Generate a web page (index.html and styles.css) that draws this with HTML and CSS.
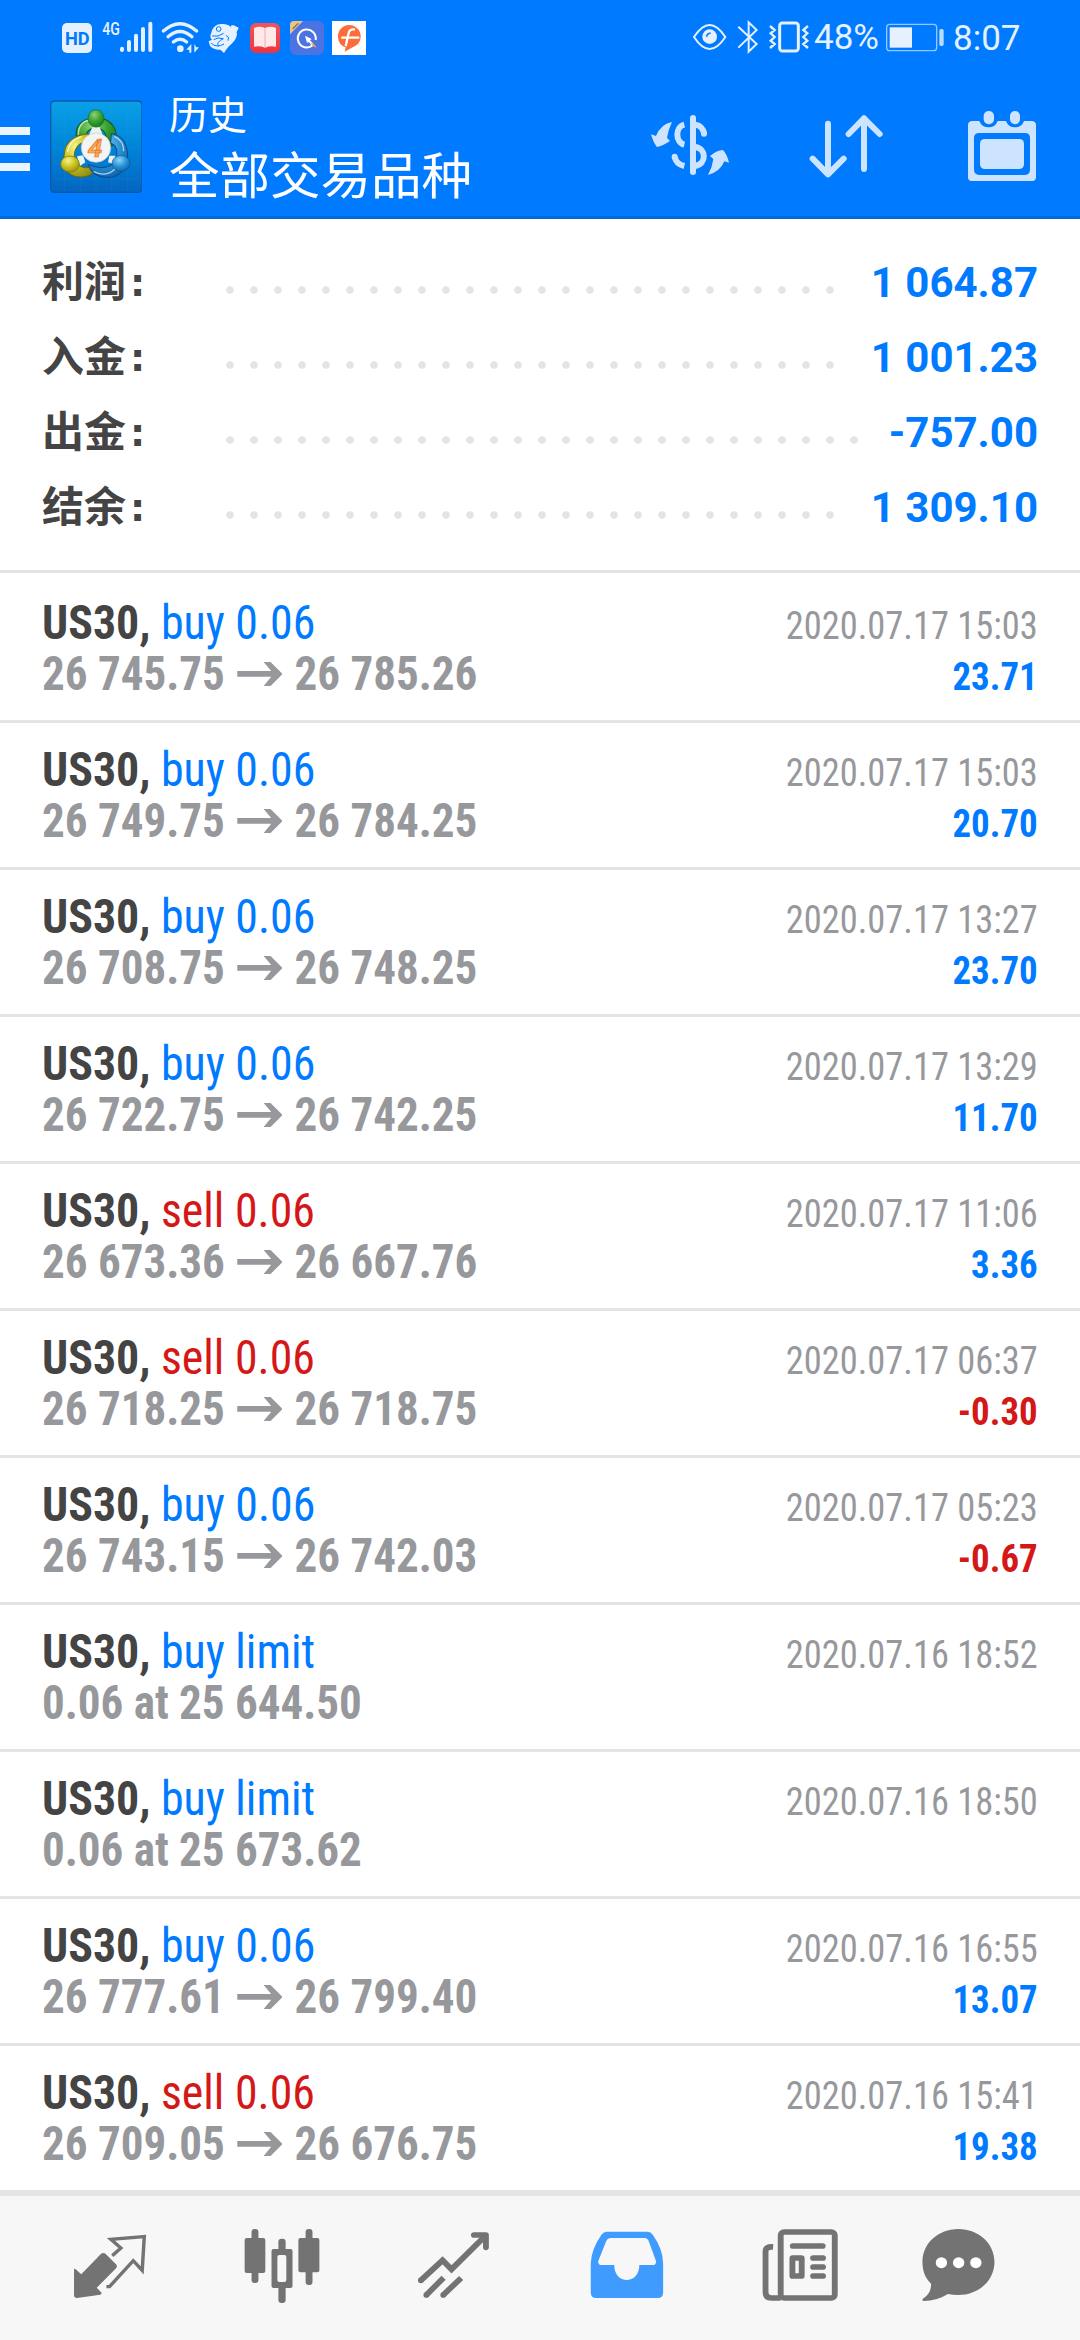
FILE: index.html
```html
<!DOCTYPE html>
<html lang="zh-CN">
<head>
<meta charset="utf-8">
<title>历史</title>
<link rel="stylesheet" href="styles.css">
</head>
<body>
<svg class="defs" width="0" height="0">
  <defs>
    <symbol id="arrow" viewBox="0 0 132 72" preserveAspectRatio="none"><path d="M0 27H99L77 0H97L132 36L97 72H77L99 44H0Z" fill="currentColor"/></symbol>
    <linearGradient id="lgBg" x1="0" y1="0" x2="0" y2="1"><stop offset="0" stop-color="#0aa0e8"/><stop offset=".5" stop-color="#0085d8"/><stop offset="1" stop-color="#0465c0"/></linearGradient>
    <radialGradient id="lgG" cx=".4" cy=".3" r=".8"><stop offset="0" stop-color="#8fd07a"/><stop offset=".5" stop-color="#37a22f"/><stop offset="1" stop-color="#15701e"/></radialGradient>
    <radialGradient id="lgY" cx=".4" cy=".3" r=".8"><stop offset="0" stop-color="#f6f38a"/><stop offset=".5" stop-color="#c9c21e"/><stop offset="1" stop-color="#8d8a10"/></radialGradient>
    <radialGradient id="lgB" cx=".4" cy=".3" r=".8"><stop offset="0" stop-color="#8fd4f8"/><stop offset=".5" stop-color="#2a93d6"/><stop offset="1" stop-color="#0a5aa2"/></radialGradient>
    <linearGradient id="lgBook" x1="0" y1="0" x2="0" y2="1"><stop offset="0" stop-color="#f4545c"/><stop offset="1" stop-color="#ee343f"/></linearGradient>
  </defs>
</svg>

<header class="header">
  <div class="status">
    <svg class="s-hd" viewBox="186 60 90 108"><rect x="186" y="69" width="90" height="90" rx="15" fill="#e5f1ff"/><text x="195" y="134" font-size="54" font-weight="700" textLength="74" lengthAdjust="spacingAndGlyphs" fill="#007aff">HD</text></svg>
    <svg class="s-signal" viewBox="306 60 156 108"><text x="307" y="106" font-size="55" font-weight="500" textLength="53" lengthAdjust="spacingAndGlyphs" fill="#e5f1ff">4G</text><g stroke="#e5f1ff" stroke-width="12" stroke-linecap="round"><path d="M366 146V150M387 126V150M408 107V150M429 87V150M451 71V150"/></g></svg>
    <svg class="s-wifi" viewBox="482 60 117 108"><g fill="none" stroke="#e5f1ff" stroke-width="10" stroke-linecap="round"><path d="M489 93Q539 49 589 93M503 110Q539 79 575 110M519 126Q539 110 559 126"/></g><circle cx="540" cy="146" r="10" fill="#e5f1ff"/><path d="M573 132V158H567V149H558ZM582 132V158L596 142H588Z" fill="#e5f1ff"/></svg>
    <svg class="s-bird" viewBox="624 60 93 108"><path d="M634 98C638 80 652 70 668 72C682 71 692 78 698 86C690 78 692 74 701 76L716 83C714 92 708 92 711 102C709 118 700 127 690 136C684 142 679 148 672 159L661 149C650 150 636 146 630 138L626 124L636 119C630 113 630 106 634 98Z" fill="#e5f1ff"/><path d="M636 108Q655 112 671 100M641 119L654 114L670 116Q648 126 655 139M678 106Q690 111 684 122M634 130Q650 145 672 132" fill="none" stroke="#007aff" stroke-width="3"/><circle cx="656" cy="87" r="7" fill="none" stroke="#007aff" stroke-width="3"/></svg>
    <svg class="s-book" viewBox="750 60 90 108"><rect x="750" y="69" width="90" height="90" rx="18" fill="url(#lgBook)"/><path d="M762 84Q779 77 795 84Q811 77 828 84V140Q811 136 795 143Q779 136 762 140Z" fill="#ffe9e9"/><path d="M795 85V142" stroke="#f5a9ad" stroke-width="3"/></svg>
    <svg class="s-app" viewBox="870 60 102 108"><rect x="870" y="63" width="102" height="102" rx="17" fill="#4b74e2"/><path d="M870 103V75Q870 63 882 63H909Z" fill="#e9c58c"/><path d="M878 87L895 70" stroke="#8f7545" stroke-width="4"/><path d="M938 136A27 27 0 1 1 947 120" fill="none" stroke="#fff" stroke-width="6"/><path d="M915 107L935 117L930 121L943 134L936 139L927 126L921 128Z" fill="#fff"/><path d="M932 127L947 137L949 143L938 138Z" fill="#f3a640"/></svg>
    <svg class="s-f" viewBox="996 60 102 108"><rect x="996" y="63" width="102" height="102" fill="#fff"/><path d="M1047 75C1068 75 1082 91 1082 109C1082 126 1072 137 1058 142L1034 155L1037 142C1023 138 1014 126 1014 109C1014 91 1028 75 1047 75Z" fill="#fd6c3b"/><path d="M1065 89Q1048 84 1045 103L1037 139M1024 113H1078" fill="none" stroke="#fff" stroke-width="7"/></svg>

    <svg class="s-eye" viewBox="158 60 100 108"><path d="M161 111Q208 39 255 111Q208 183 161 111Z" fill="none" stroke="#e5f1ff" stroke-width="6"/><circle cx="208" cy="110" r="22" fill="#e5f1ff"/><path d="M199 110A10 10 0 0 1 211 100" fill="none" stroke="#007aff" stroke-width="5"/></svg>
    <svg class="s-bt" viewBox="290 60 64 108"><path d="M294 80L349 132L325 155V67L349 90L294 143" fill="none" stroke="#e5f1ff" stroke-width="6"/></svg>
    <svg class="s-vib" viewBox="386 60 120 108"><rect x="418" y="69" width="56" height="84" rx="8" fill="none" stroke="#e5f1ff" stroke-width="9"/><path d="M389 78L403 90L391 100L403 111L391 122L403 132L389 144M503 78L489 90L501 100L489 111L501 122L489 132L503 144" fill="none" stroke="#e5f1ff" stroke-width="7"/></svg>
    <span class="s-pct">48%</span>
    <svg class="s-bat" viewBox="738 60 174 108"><rect x="740" y="73" width="150" height="79" rx="9" fill="none" stroke="#94c8ff" stroke-width="4"/><rect x="749" y="82" width="67" height="61" fill="#e5f1ff"/><rect x="898" y="87" width="13" height="51" rx="5" fill="#b9dbff"/></svg>
    <span class="s-time">8:07</span>
  </div>

  <div class="toolbar">
    <div class="menu"><i></i><i></i><i></i></div>
    <svg class="logo" viewBox="149 301 278 278">
      <rect x="151" y="304" width="274" height="274" rx="12" fill="url(#lgBg)" stroke="#0759a8" stroke-width="4"/>
      <path d="M193 306V576M240 306V576M287 306V576M334 306V576M381 306V576M153 350H423M153 397H423M153 444H423M153 491H423M153 538H423" stroke="#35a8ef" stroke-opacity=".2" stroke-width="2"/>
      <path d="M231 425C218 385 240 355 287 355C334 355 355 390 344 425C339 440 325 445 316 430C322 400 308 386 287 386C264 386 252 401 260 419Z" fill="url(#lgG)" stroke="#0f591b" stroke-width="3"/>
      <path d="M272 403C230 400 194 425 192 461L188 495C194 519 223 537 252 531C275 529 284 515 276 499C250 512 222 496 222 469C222 442 240 427 260 427Z" fill="url(#lgY)" stroke="#6b690f" stroke-width="3"/>
      <path d="M333 402C365 405 386 436 381 478C379 512 350 536 317 533C290 532 269 516 264 494C292 509 330 508 344 484C355 459 350 438 331 430Z" fill="url(#lgB)" stroke="#0a4c8d" stroke-width="3"/>
      <path d="M234 405Q234 367 268 361M202 457Q206 422 244 411M370 455Q370 422 342 410M280 516Q316 534 345 507" fill="none" stroke="#fff" stroke-opacity=".65" stroke-width="4"/>
      <path d="M276 383H298L306 403H267ZM230 470L248 467L255 488L239 499ZM327 468H345V495L323 488Z" fill="#e8f4ef"/>
      <ellipse cx="287" cy="356" rx="24" ry="26" fill="url(#lgG)" stroke="#176a26" stroke-width="2"/>
      <ellipse cx="209" cy="493" rx="28" ry="24" fill="url(#lgY)" stroke="#77750e" stroke-width="2"/>
      <ellipse cx="362" cy="491" rx="27" ry="24" fill="url(#lgB)" stroke="#0b579c" stroke-width="2"/>
      <circle cx="287" cy="444" r="44" fill="#f4f4f5" stroke="#c8c8c8" stroke-width="2"/>
      <text x="262" y="471" font-size="76" font-weight="700" font-style="italic" textLength="44" lengthAdjust="spacingAndGlyphs" fill="#ffab42" stroke="#dd7440" stroke-width="2">4</text>
    </svg>
    <div class="titles">
      <div class="t1">历史</div>
      <div class="t2">全部交易品种</div>
    </div>
    <div class="actions">
      <svg width="80" height="73.33" viewBox="30 330 240 220"><g fill="none" stroke="#cce4ff" stroke-width="18"><path d="M159 354V516" stroke-linecap="round"/><path d="M133 374C105 380 105 427 133 434M104 470Q108 492 133 498"/><path d="M104 470V471M192 400V401" stroke-linecap="round"/><path d="M166 374Q188 378 192 400M166 441C200 446 200 492 166 498"/></g><path d="M96 366Q85 389 81 413L90 423Q68 438 51 441Q40 428 33 403L48 408Q63 371 96 366ZM204 525Q217 502 220 477L210 468Q231 450 249 450Q261 462 267 488L253 484Q241 515 204 525Z" fill="#cce4ff"/></svg>
      <svg width="76" height="73.33" viewBox="504 330 228 220"><path d="M564 371V523M518 476L564 523L611 476M672 507V355M626 402L672 355L719 402" fill="none" stroke="#cce4ff" stroke-width="18" stroke-linecap="round" stroke-linejoin="round"/></svg>
      <svg width="72" height="73.33" viewBox="978 330 216 220"><path fill-rule="evenodd" d="M995 363H1018Q1025 382 1046 382Q1066 382 1073 363H1098Q1105 382 1125 382Q1145 382 1152 363H1177Q1188 364 1188 375V532Q1188 543 1177 543H995Q984 543 984 532V375Q984 364 995 363ZM1018 399Q1002 399 1002 414V508Q1002 525 1018 525H1155Q1170 525 1170 508V414Q1170 399 1155 399Z" fill="#cce4ff"/><rect x="1020" y="417" width="132" height="90" rx="14" fill="#cce4ff"/><g fill="#cce4ff" stroke="#007aff" stroke-width="8" paint-order="stroke"><rect x="1031" y="333" width="31" height="40" rx="15"/><rect x="1110" y="333" width="30" height="40" rx="15"/></g></svg>
    </div>
  </div>
</header>

<section class="summary">
  <div class="sum"><b>利润<em>:</em></b><i class="dots"></i><strong>1 064.87</strong></div>
  <div class="sum"><b>入金<em>:</em></b><i class="dots"></i><strong>1 001.23</strong></div>
  <div class="sum"><b>出金<em>:</em></b><i class="dots"></i><strong>-757.00</strong></div>
  <div class="sum"><b>结余<em>:</em></b><i class="dots"></i><strong>1 309.10</strong></div>
</section>

<main class="deals">
  <article class="deal"><div class="l1"><b>US30,</b><span class="op">buy 0.06</span></div><time>2020.07.17 15:03</time><div class="l2"><span>26 745.75</span><svg><use href="#arrow"/></svg><span>26 785.26</span></div><strong>23.71</strong></article>
  <article class="deal"><div class="l1"><b>US30,</b><span class="op">buy 0.06</span></div><time>2020.07.17 15:03</time><div class="l2"><span>26 749.75</span><svg><use href="#arrow"/></svg><span>26 784.25</span></div><strong>20.70</strong></article>
  <article class="deal"><div class="l1"><b>US30,</b><span class="op">buy 0.06</span></div><time>2020.07.17 13:27</time><div class="l2"><span>26 708.75</span><svg><use href="#arrow"/></svg><span>26 748.25</span></div><strong>23.70</strong></article>
  <article class="deal"><div class="l1"><b>US30,</b><span class="op">buy 0.06</span></div><time>2020.07.17 13:29</time><div class="l2"><span>26 722.75</span><svg><use href="#arrow"/></svg><span>26 742.25</span></div><strong>11.70</strong></article>
  <article class="deal"><div class="l1"><b>US30,</b><span class="op red">sell 0.06</span></div><time>2020.07.17 11:06</time><div class="l2"><span>26 673.36</span><svg><use href="#arrow"/></svg><span>26 667.76</span></div><strong>3.36</strong></article>
  <article class="deal"><div class="l1"><b>US30,</b><span class="op red">sell 0.06</span></div><time>2020.07.17 06:37</time><div class="l2"><span>26 718.25</span><svg><use href="#arrow"/></svg><span>26 718.75</span></div><strong class="red">-0.30</strong></article>
  <article class="deal"><div class="l1"><b>US30,</b><span class="op">buy 0.06</span></div><time>2020.07.17 05:23</time><div class="l2"><span>26 743.15</span><svg><use href="#arrow"/></svg><span>26 742.03</span></div><strong class="red">-0.67</strong></article>
  <article class="deal"><div class="l1"><b>US30,</b><span class="op">buy limit</span></div><time>2020.07.16 18:52</time><div class="l2"><span>0.06 at 25 644.50</span></div></article>
  <article class="deal"><div class="l1"><b>US30,</b><span class="op">buy limit</span></div><time>2020.07.16 18:50</time><div class="l2"><span>0.06 at 25 673.62</span></div></article>
  <article class="deal"><div class="l1"><b>US30,</b><span class="op">buy 0.06</span></div><time>2020.07.16 16:55</time><div class="l2"><span>26 777.61</span><svg><use href="#arrow"/></svg><span>26 799.40</span></div><strong>13.07</strong></article>
  <article class="deal"><div class="l1"><b>US30,</b><span class="op red">sell 0.06</span></div><time>2020.07.16 15:41</time><div class="l2"><span>26 709.05</span><svg><use href="#arrow"/></svg><span>26 676.75</span></div><strong>19.38</strong></article>
</main>

<nav class="tabs">
  <svg viewBox="203.3 138 232.3 240" preserveAspectRatio="none"><path d="M215 266L219 267L236 283L293 222Q300 216 307 222L337 253Q342 259 337 265L281 323L295 338Q295 343 291 344L224 354Q215 354 215 346Z" fill="#737373"/><path d="M326 227L351 204L322 178L419 170L413 271L387 242L318 320H309" fill="none" stroke="#737373" stroke-width="10"/></svg>
  <svg viewBox="704.2 138 232.3 240" preserveAspectRatio="none"><g fill="#737373"><rect x="709" y="174" width="60" height="105" rx="6"/><rect x="729" y="147" width="20" height="162" rx="9"/><rect x="865" y="174" width="61" height="103" rx="6"/><rect x="886" y="147" width="20" height="168" rx="9"/><rect x="787" y="207" width="61" height="117" rx="6"/><rect x="807" y="176" width="21" height="193" rx="9"/></g><rect x="804" y="225" width="26" height="81" rx="6" fill="#f7f7f7"/></svg>
  <svg viewBox="1205 138 232.3 240" preserveAspectRatio="none"><g fill="none" stroke="#737373" stroke-width="17"><path d="M1222 301L1285 241L1311 268L1411 166" stroke-linejoin="miter"/><path d="M1376 165H1411V202" stroke-linecap="round" stroke-linejoin="round"/><path d="M1222 301V301.1M1238 345V345.1M1287 345V345.1" stroke-linecap="round"/><path d="M1238 345L1288 293M1287 345L1339 294"/></g></svg>
  <svg viewBox="137.9 138 232.3 240" preserveAspectRatio="none"><path fill-rule="evenodd" d="M193 155H311Q320 155 326 164Q356 208 356 250V338Q356 354 340 354H162Q146 354 146 338V250Q147 208 177 164Q183 155 193 155ZM205 174Q195 174 191 183L168 242Q166 255 177 255H214C214 315 287 315 287 255H326Q337 255 335 242L314 183Q311 174 301 174Z" fill="#409bff"/></svg>
  <svg viewBox="638.9 138 232.3 240" preserveAspectRatio="none"><g fill="none" stroke="#737373" stroke-width="17"><rect x="699" y="156" width="157" height="198" rx="10"/><path d="M677 201Q655 199 655 214V336Q655 354 672 354H699"/><path d="M734 198H821M793 234H822M793 261H822M793 288H822" stroke-linecap="round"/><rect x="733" y="234" width="27" height="54" rx="1"/></g></svg>
  <svg viewBox="1096 138 232.3 240" preserveAspectRatio="none"><path d="M1213 147C1272 147 1318 190 1318 246C1318 302 1272 345 1213 345Q1197 345 1183 342Q1150 363 1113 363Q1105 361 1112 355Q1135 339 1134 311C1115 292 1109 271 1109 246C1109 190 1155 147 1213 147Z" fill="#737373"/><g fill="#fff"><circle cx="1164" cy="248" r="16.5"/><circle cx="1214" cy="248" r="16.5"/><circle cx="1264" cy="248" r="16.5"/></g></svg>
</nav>
</body>
</html>
```
FILE: styles.css
```css
* { box-sizing: border-box; margin: 0; padding: 0; }
body { width: 1080px; height: 2340px; background: #fff; font-family: Roboto, "Noto Sans CJK SC", sans-serif; overflow: hidden; display: flex; flex-direction: column; }
svg { display: block; flex: none; }
i, em { font-style: normal; }
.defs { width: 0; height: 0; }

.header { height: 219px; background: #007aff; border-bottom: 3px solid #0069d9; }
.status { height: 72px; padding-top: 20px; display: flex; align-items: flex-start; color: #e5f1ff; font-size: 35px; line-height: 36px; }
.status svg { height: 36px; overflow: visible; }
.s-hd { width: 30px; margin-left: 62px; }
.s-signal { width: 52px; margin-left: 10px; }
.s-wifi { width: 39px; margin-left: 6.7px; }
.s-bird { width: 31px; margin-left: 8.3px; }
.s-book { width: 30px; margin-left: 11px; }
.s-app { width: 34px; margin-left: 10px; }
.s-f { width: 34px; margin-left: 8px; }
.s-eye { width: 33.3px; margin-left: auto; }
.s-bt { width: 21.3px; margin-left: 10.7px; }
.s-vib { width: 40px; margin-left: 10.7px; }
.s-pct { width: 72px; margin-left: 5px; white-space: nowrap; }
.s-bat { width: 58px; }
.s-time { width: 64px; margin: 0 63px 0 9px; white-space: nowrap; padding-top: 1px; }

.toolbar { height: 144px; display: flex; align-items: flex-start; color: #fff; }
.menu { width: 30px; margin-top: 55px; display: flex; flex-direction: column; gap: 10px; }
.menu i { height: 8px; background: #ebf5ff; }
.logo { width: 92.7px; height: 92.7px; margin: 28.3px 0 0 19.7px; }
.titles { margin: 16px 0 0 26.6px; }
.t1 { font-size: 39px; line-height: 56px; }
.t2 { font-size: 50.5px; line-height: 66px; }
.actions { margin: 38px 42px 0 auto; display: flex; }
.actions svg:nth-child(2) { margin: 0 82px 0 78px; }

.summary { height: 354px; border-bottom: 3px solid #e4e4e4; padding: 26px 42px 0; }
.sum { height: 75px; display: flex; align-items: center; font-size: 42px; line-height: 75px; }
.sum b { width: 176px; color: #444; display: flex; }
.sum em { padding: 1px 0 0 4px; font: 700 38px/75px "DejaVu Sans", sans-serif; }
.dots { flex: 1; height: 8px; margin: 14px 27px 0 0; background: radial-gradient(circle, #e4e4e4 3.4px, transparent 4.1px) 0 0 / 24px 8px repeat-x; }
.sum strong { color: #007aff; }

.deals { padding-top: 3px; font-family: "Roboto Condensed", Roboto, sans-serif; font-stretch: 75%; }
.deal { height: 147px; border-bottom: 3px solid #e4e4e4; padding: 21px 42px 0; display: grid; grid-template-columns: 1fr auto; grid-template-rows: 51px 51px; align-items: baseline; }
.deal > * { line-height: 51px; white-space: nowrap; }
.l1, .l2 { font-size: 48px; display: flex; transform-origin: left; }
.l1 { color: #444; gap: 11px; transform: scaleX(.955); }
.op { color: #007aff; }
.l2 { color: #97989c; font-weight: 700; gap: 13px; align-items: center; transform: scaleX(.938); }
.l2 svg { width: 48.5px; height: 24px; }
.deal time { font-size: 39px; color: #97989c; text-align: right; transform: scaleX(.934); transform-origin: right; }
.deal strong { font-size: 39px; color: #007aff; text-align: right; transform: scaleX(.945); transform-origin: right; }
.deal .red { color: #d41818; }

.tabs { height: 147px; border-top: 3px solid #e4e4e4; background: #f7f7f7; padding: 30px 0 0 70px; display: flex; gap: 92.5px; }
.tabs svg { width: 80px; height: 80px; }
.tabs svg:last-child { margin-left: -15px; }
```
